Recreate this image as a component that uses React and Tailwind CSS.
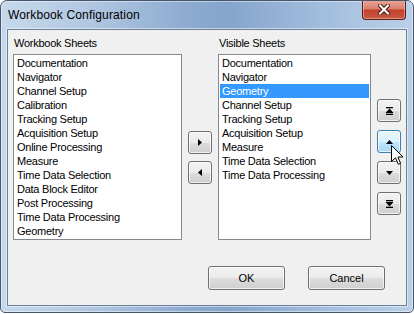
import React from "react";

const leftItems = [
  "Documentation",
  "Navigator",
  "Channel Setup",
  "Calibration",
  "Tracking Setup",
  "Acquisition Setup",
  "Online Processing",
  "Measure",
  "Time Data Selection",
  "Data Block Editor",
  "Post Processing",
  "Time Data Processing",
  "Geometry",
];

const rightItems = [
  "Documentation",
  "Navigator",
  "Geometry",
  "Channel Setup",
  "Tracking Setup",
  "Acquisition Setup",
  "Measure",
  "Time Data Selection",
  "Time Data Processing",
];

function ListBox({ items, selected, width }) {
  return (
    <div
      className={`${width} h-[186px] bg-white border border-[#828790] p-[1px] flex flex-col`}
    >
      {items.map((t, i) => (
        <div
          key={i}
          className={`h-[14px] leading-[14px] pl-[2px] whitespace-nowrap ${
            i === selected ? "bg-[#3399ff] text-white" : "text-black"
          }`}
        >
          {t}
        </div>
      ))}
    </div>
  );
}

function Btn({ children, hover, className = "" }) {
  return (
    <div
      className={`rounded-[3px] border flex items-center justify-center ${
        hover
          ? "border-[#3c7fb1] bg-[linear-gradient(180deg,#eaf6fd_0%,#d9f0fc_50%,#bee6fd_51%,#a7d9f5_100%)]"
          : "border-[#707070] bg-[linear-gradient(180deg,#f2f2f2_0%,#ebebeb_50%,#dddddd_51%,#cfcfcf_100%)]"
      } shadow-[inset_0_0_0_1px_rgba(255,255,255,0.7)] ${className}`}
    >
      {children}
    </div>
  );
}

const TriRight = () => (
  <svg width="4" height="7" viewBox="0 0 4 7">
    <polygon points="0,0 4,3.5 0,7" fill="#000" />
  </svg>
);
const TriLeft = () => (
  <svg width="4" height="7" viewBox="0 0 4 7">
    <polygon points="4,0 0,3.5 4,7" fill="#000" />
  </svg>
);
const TriUp = () => (
  <svg width="7" height="4" viewBox="0 0 7 4">
    <polygon points="0,4 3.5,0 7,4" fill="#000" />
  </svg>
);
const TriDown = () => (
  <svg width="7" height="4" viewBox="0 0 7 4">
    <polygon points="0,0 3.5,4 7,0" fill="#000" />
  </svg>
);
const ToTop = () => (
  <svg width="9" height="8" viewBox="0 0 9 8">
    <rect x="1" y="0" width="7" height="1.3" fill="#000" />
    <polygon points="0.5,6 4.5,1.5 8.5,6" fill="#000" />
    <rect x="1" y="6.7" width="7" height="1.3" fill="#000" />
  </svg>
);
const ToBottom = () => (
  <svg width="9" height="8" viewBox="0 0 9 8">
    <rect x="1" y="0" width="7" height="1.3" fill="#000" />
    <polygon points="0.5,2 4.5,6.5 8.5,2" fill="#000" />
    <rect x="1" y="6.7" width="7" height="1.3" fill="#000" />
  </svg>
);

export default function App() {
  return (
    <div className="w-[414px] h-[314px] bg-white font-['Liberation_Sans',Arial,sans-serif] relative">
      <div className="w-[414px] h-[313px] border border-[#46566c] rounded-t-[7px] rounded-b-[5px] flex flex-col overflow-hidden bg-[linear-gradient(90deg,#c6d8eb_0%,#b3c9e2_20%,#8eabd0_45%,#86a5cc_55%,#a4bfde_80%,#bad0e8_100%)] shadow-[inset_0_0_0_1px_rgba(255,255,255,0.45)]">
        {/* Title bar */}
        <div className="h-[28px] flex justify-between items-start shrink-0">
          <div className="pt-[7px] pl-[7px] text-[12px] leading-[15px] tracking-[0.15px] text-black">
            Workbook Configuration
          </div>
          <div className="mr-[7px] w-[44px] h-[20px] -mt-[1px] rounded-b-[4px] border border-[#5a1e16] border-t-0 bg-[linear-gradient(180deg,#e8a898_0%,#d88070_45%,#c4402c_55%,#c85a44_100%)] shadow-[inset_0_0_0_1px_rgba(255,220,210,0.45)] flex items-center justify-center">
            <svg width="12" height="11" viewBox="0 0 12 11">
              <path d="M2 1.5 L10 9.5 M10 1.5 L2 9.5" stroke="#4a1810" strokeWidth="4" strokeLinecap="round" />
              <path d="M2 1.5 L10 9.5 M10 1.5 L2 9.5" stroke="#ffffff" strokeWidth="2" strokeLinecap="square" />
            </svg>
          </div>
        </div>

        {/* Client area */}
        <div className="mx-[6px] mb-[6px] flex-1 border border-[#6b7f99] bg-[#f0f0f0] flex flex-col px-[5px] pt-[7px] text-[11px] tracking-[-0.25px] text-black shadow-[0_0_0_1px_rgba(255,255,255,0.5)]">
          {/* Labels */}
          <div className="flex h-[13px] leading-[13px] mb-[4px]">
            <div className="w-[169px] pl-[1px]">Workbook Sheets</div>
            <div className="w-[36px]" />
            <div className="w-[153px] pl-[1px]">Visible Sheets</div>
          </div>

          {/* Lists and buttons */}
          <div className="flex h-[186px] gap-[6px]">
            <ListBox items={leftItems} selected={-1} width="w-[169px]" />
            <div className="w-[24px] flex flex-col pt-[77px] gap-[7px]">
              <Btn className="h-[23px]">
                <TriRight />
              </Btn>
              <Btn className="h-[23px]">
                <TriLeft />
              </Btn>
            </div>
            <ListBox items={rightItems} selected={2} width="w-[153px]" />
            <div className="w-[24px] flex flex-col pt-[45px] gap-[8px]">
              <Btn className="h-[23px]">
                <ToTop />
              </Btn>
              <Btn className="h-[23px]" hover>
                <TriUp />
              </Btn>
              <Btn className="h-[23px]">
                <TriDown />
              </Btn>
              <Btn className="h-[23px]">
                <ToBottom />
              </Btn>
            </div>
          </div>

          {/* Bottom buttons */}
          <div className="flex justify-end gap-[23px] mt-[26px] mr-[16px] tracking-normal">
            <Btn className="w-[77px] h-[24px]">OK</Btn>
            <Btn className="w-[77px] h-[24px]">Cancel</Btn>
          </div>
        </div>
      </div>

      {/* Mouse cursor */}
      <svg
        className="absolute left-[391px] top-[145px]"
        width="13"
        height="21"
        viewBox="0 0 13 21"
      >
        <path
          d="M0.5 0.5 L0.5 16.5 L4.5 12.8 L7.3 19.3 L9.6 18.3 L6.9 12 L12 12 Z"
          fill="#fff"
          stroke="#000"
          strokeWidth="1"
          strokeLinejoin="miter"
        />
      </svg>
    </div>
  );
}
